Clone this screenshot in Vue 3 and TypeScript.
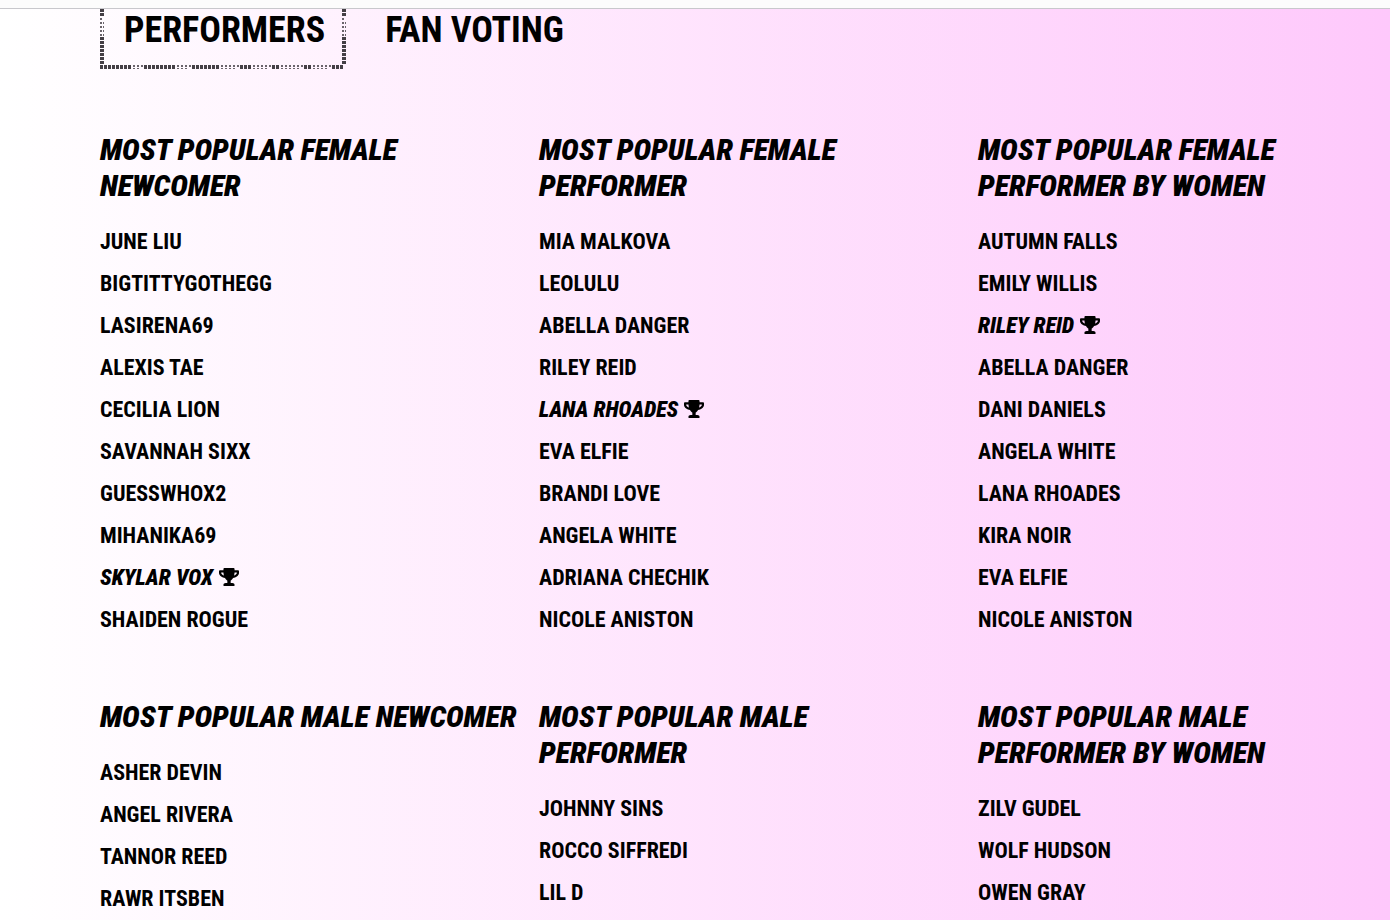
<script setup lang="ts">
interface Entry {
  name: string
  winner?: boolean
}
interface Category {
  title: string
  entries: Entry[]
}

const list = (names: string, winner = ''): Entry[] =>
  names.split('|').map((name) => ({ name, winner: name === winner }))

const categories: Category[] = [
  {
    title: 'Most Popular Female Newcomer',
    entries: list('JUNE LIU|BIGTITTYGOTHEGG|LASIRENA69|ALEXIS TAE|CECILIA LION|SAVANNAH SIXX|GUESSWHOX2|MIHANIKA69|SKYLAR VOX|SHAIDEN ROGUE', 'SKYLAR VOX'),
  },
  {
    title: 'Most Popular Female Performer',
    entries: list('MIA MALKOVA|LEOLULU|ABELLA DANGER|RILEY REID|LANA RHOADES|EVA ELFIE|BRANDI LOVE|ANGELA WHITE|ADRIANA CHECHIK|NICOLE ANISTON', 'LANA RHOADES'),
  },
  {
    title: 'Most Popular Female Performer by Women',
    entries: list('AUTUMN FALLS|EMILY WILLIS|RILEY REID|ABELLA DANGER|DANI DANIELS|ANGELA WHITE|LANA RHOADES|KIRA NOIR|EVA ELFIE|NICOLE ANISTON', 'RILEY REID'),
  },
  { title: 'Most Popular Male Newcomer', entries: list('ASHER DEVIN|ANGEL RIVERA|TANNOR REED|RAWR ITSBEN') },
  { title: 'Most Popular Male Performer', entries: list('JOHNNY SINS|ROCCO SIFFREDI|LIL D') },
  { title: 'Most Popular Male Performer by Women', entries: list('ZILV GUDEL|WOLF HUDSON|OWEN GRAY') },
]

const horizontal = "oooooooo::'oooooooo:::'ooooooo::::'ooo::::'oo:::::'oo::::'ooo"
const vertical = "oo'::::ooooooo"

// Each cell is a small block, a pair of dots or a single dot.
function cells(pattern: string, kindWanted: string, across: boolean, offset: number): string {
  return [...pattern]
    .map((kind, i) => {
      if (kindWanted.indexOf(kind) < 0) return ''
      const p = i * 4
      const rect = (a: number, b: number, w: number, h: number) =>
        across ? `M${p + a} ${offset + b}h${w}v${h}h-${w}z` : `M${offset + b} ${p + a}h${h}v${w}h-${h}z`
      if (kind === 'o') return rect(0, 0, 3, 4)
      if (kind === ':') return rect(1, 0, 2, 2) + rect(1, 3, 2, 1)
      return rect(1, 0, 2, 2)
    })
    .join('')
}
const frame = (kinds: string): string =>
  cells(horizontal, kinds, true, 56) + cells(vertical, kinds, false, 0) + cells(vertical, kinds, false, 242)
const blocks = frame('o')
const dots = frame(":'")
</script>

<template>
  <div class="page">
    <header class="topbar"></header>
    <main class="content">
      <nav class="tabs">
        <button type="button" class="tab active">
          <svg class="frame" viewBox="0 0 246 60" preserveAspectRatio="xMinYMin meet" aria-hidden="true">
            <path :d="blocks" fill="#443f45" />
            <path :d="dots" fill="#6a646b" />
          </svg>
          PERFORMERS
        </button>
        <button type="button" class="tab">FAN VOTING</button>
      </nav>
      <div class="grid">
        <section v-for="category in categories" :key="category.title">
          <h2>{{ category.title }}</h2>
          <ul>
            <li v-for="entry in category.entries" :key="entry.name">
              <a href="#" :class="{ winner: entry.winner }">{{ entry.name }}<svg v-if="entry.winner" class="cup" viewBox="0 0 576 512" aria-label="Winner"><path d="M552 64H448V24c0-13.300-10.700-24-24-24H152c-13.300 0-24 10.700-24 24v40H24C10.700 64 0 74.700 0 88v56c0 35.700 22.500 72.400 61.900 100.700 31.500 22.700 69.800 37.100 110 41.700C203.300 338.500 240 360 240 360v72h-48c-35.300 0-64 20.700-64 56v12c0 6.600 5.400 12 12 12h296c6.600 0 12-5.400 12-12v-12c0-35.300-28.700-56-64-56h-48v-72s36.700-21.500 68.100-73.600c40.300-4.600 78.600-19 110-41.700 39.300-28.300 61.900-65 61.900-100.700V88c0-13.300-10.700-24-24-24zM99.300 192.800C74.900 175.200 64 155.600 64 144v-16h64.200c1 32.600 5.800 61.200 12.800 86.200-15.100-5.200-29.200-12.400-41.700-21.400zM512 144c0 16.100-17.700 36.100-35.300 48.800-12.500 9-26.700 16.200-41.800 21.400 7-25 11.800-53.600 12.800-86.200H512v16z" /></svg></a>
            </li>
          </ul>
        </section>
      </div>
    </main>
  </div>
</template>

<style>
body {
  margin: 0;
}
</style>

<style scoped>
.page {
  height: 100vh;
  overflow: hidden;
  background: linear-gradient(90deg, #fff 0%, #fec8fb 100%);
  color: #000;
  font-family: "Liberation Sans Narrow", "Roboto Condensed", "Open Sans Condensed", "Liberation Sans", sans-serif;
  font-weight: 700;
}
.topbar {
  height: 8px;
  background: #fcfcfc;
  border-bottom: 1px solid #c8c8cc;
}
.content {
  padding: 0 0 0 100px;
}
.tabs {
  display: flex;
  gap: 16px;
}
.tab {
  position: relative;
  height: 60px;
  padding: 0 20px 18px 24px;
  border: 0;
  background: none;
  color: inherit;
  font: inherit;
  font-size: 36px;
  line-height: 42px;
  white-space: nowrap;
}
.frame {
  position: absolute;
  top: 0;
  left: 0;
  width: 246px;
  height: 60px;
}
.grid {
  display: grid;
  grid-template-columns: repeat(3, minmax(0, 1fr));
  column-gap: 27px;
  row-gap: 55px;
  padding-top: 63px;
}
h2 {
  margin: 0 -10px 20px 0;
  font-size: 30px;
  line-height: 36px;
  font-style: italic;
  font-weight: 900;
  text-transform: uppercase;
}
ul {
  margin: 0;
  padding: 0;
  list-style: none;
}
li {
  height: 42px;
  font-size: 22px;
  line-height: 36px;
}
a {
  color: inherit;
  text-decoration: none;
}
.winner {
  font-style: italic;
  font-weight: 900;
}
.cup {
  width: 20px;
  height: 18px;
  margin-left: 6px;
  vertical-align: -1px;
}
</style>
